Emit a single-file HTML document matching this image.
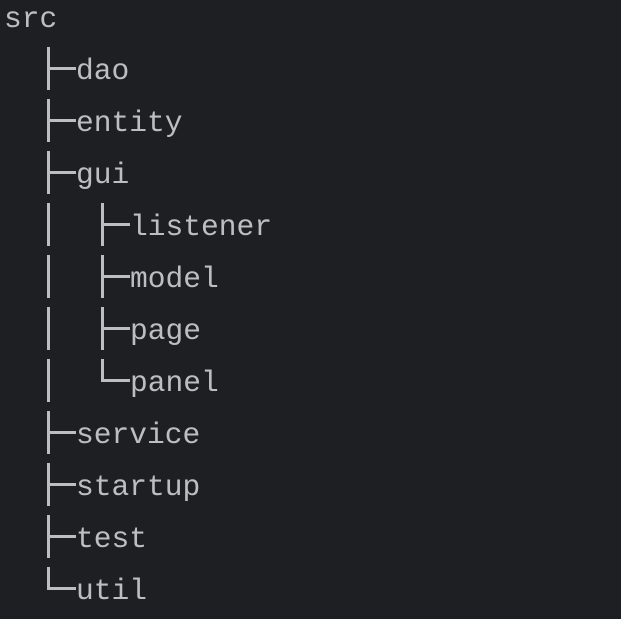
<!DOCTYPE html>
<html><head><style>
body{margin:0;width:621px;height:619px;background:#1e1f22;overflow:hidden;position:relative;font-family:"Liberation Mono",monospace;font-size:29.6px;color:#bcbec4}
.t{position:absolute;line-height:52px;white-space:pre}
.v{position:absolute;width:3px;background:#bcbec4}
.h{position:absolute;height:3px;background:#bcbec4}
</style></head><body>
<div class="t" style="left:4px;top:-7px">src</div>
<script>
var rows=[[0,"dao",0],[0,"entity",0],[0,"gui",0],[1,"listener",0],[1,"model",0],[1,"page",0],[1,"panel",1],[0,"service",0],[0,"startup",0],[0,"test",0],[0,"util",1]];
var h="";
rows.forEach(function(r,i){
 var top=46+52*i, lvl=r[0], last=r[2];
 var vx=lvl?101:47, tx=lvl?130:76;
 var vb=last?70+52*i:90+52*i;
 h+='<div class="v" style="left:'+vx+'px;top:'+(top+1)+'px;height:'+(vb-top-1)+'px"></div>';
 h+='<div class="h" style="left:'+(vx+2)+'px;top:'+(67+52*i)+'px;width:'+(tx-vx-2)+'px"></div>';
 if(lvl) h+='<div class="v" style="left:47px;top:'+(top+1)+'px;height:43px"></div>';
 h+='<div class="t" style="left:'+tx+'px;top:'+(top-1)+'px">'+r[1]+'</div>';
});
document.write(h);
</script>
</body></html>
